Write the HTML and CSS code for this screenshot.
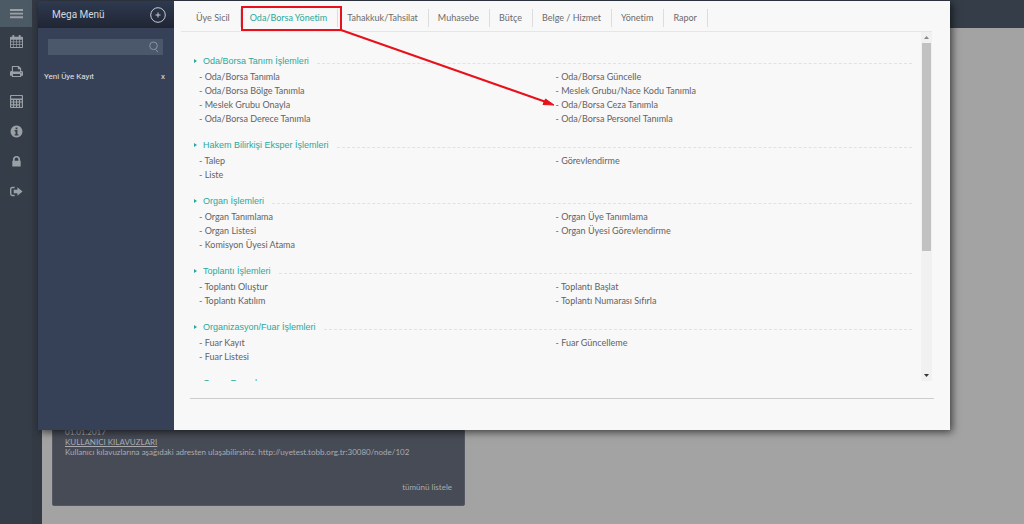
FILE: index.html
```html
<!DOCTYPE html>
<html lang="tr">
<head>
<meta charset="utf-8">
<title>Mega Menü</title>
<link rel="stylesheet" href="styles.css">
</head>
<body>
<div class="app">
  <nav class="rail" aria-label="Kısayollar">
    <button class="rail-btn active" aria-label="Menü"><svg viewBox="0 0 14 14"><path d="M0 2.2h14v2H0zM0 6.1h14v2H0zM0 10h14v2H0z"/></svg></button>
    <button class="rail-btn" aria-label="Takvim"><svg viewBox="0 0 14 14"><path fill-rule="evenodd" d="M1 2h1.5V.8Q2.500 0 3.300 0h.6q.8 0 .8.8V2h4.600V.8q0-.8.8-.8h.6q.8 0 .8.8V2H13q1 0 1 1v10q0 1-1 1H1q-1 0-1-1V3q0-1 1-1zM1 5v2h2.400V5zm3.100 0v2h2.500V5zm3.200 0v2h2.500V5zm3.200 0v2H13V5zM1 7.700V10h2.400V7.700zm3.100 0V10h2.500V7.700zm3.200 0V10h2.500V7.700zm3.200 0V10H13V7.700zM1 10.700V13h2.400v-2.300zm3.100 0V13h2.500v-2.300zm3.200 0V13h2.500v-2.300zm3.200 0V13H13v-2.300z"/></svg></button>
    <button class="rail-btn" aria-label="Yazdır"><svg viewBox="0 0 14 14"><path fill-rule="evenodd" d="M2 6.500V1h7.500L12 3.500v3h.5Q14 6.500 14 8v3.500h-2V13H2v-1.500H0V8q0-1.500 1.500-1.500zM3.200 2.200V7h7.600V4.500H8.500V2.200zM3.200 9.800v2h7.600v-2zM12 7.700a.6.600 0 1 0 .01 0z"/></svg></button>
    <button class="rail-btn" aria-label="Hesap makinesi"><svg viewBox="0 0 14 14"><path fill-rule="evenodd" d="M1 0h12q1 0 1 1v12q0 1-1 1H1q-1 0-1-1V1q0-1 1-1zM1.300 1.200v2.600h11.400V1.200zM1.300 5.300v1.700h1.900V5.300zm3.200 0v1.700h1.900V5.300zm3.200 0v1.700h1.900V5.300zm3.200 0v1.700h1.800V5.300zM1.300 8.200v1.700h1.900V8.200zm3.200 0v1.700h1.900V8.200zm3.200 0v1.700h1.900V8.200zm3.200 0v4.700h1.800V8.200zM1.300 11.200v1.700h1.900v-1.700zm3.200 0v1.700h1.900v-1.700zm3.200 0v1.700h1.900v-1.700z"/></svg></button>
    <button class="rail-btn" aria-label="Bilgi"><svg viewBox="0 0 14 14"><path fill-rule="evenodd" d="M7 .6a6.400 6.400 0 1 0 .01 0zM6 2.700h2v1.800H6zM5 5.500h3v4.400h1v1.400H5V9.900h1V6.900H5z"/></svg></button>
    <button class="rail-btn" aria-label="Kilitle"><svg viewBox="0 0 14 14"><path fill-rule="evenodd" d="M3.200 6.200V4.800a3.800 3.800 0 0 1 7.600 0v1.400h.7v6.300h-9V6.200zM5 6.200h4V4.800a2 2 0 0 0-4 0z"/></svg></button>
    <button class="rail-btn" aria-label="Çıkış"><svg viewBox="0 0 14 14"><path d="M5 2v1.500H2.500q-1 0-1 1v5q0 1 1 1H5V12H2.500Q0 12 0 9.500v-5Q0 2 2.500 2zM8 2.500L13.500 7 8 11.500V9H4V5h4z"/></svg></button>
  </nav>
  <div class="gutter"></div>
  <div class="page">
    <header class="topbar"></header>
    <main class="content">
      <section class="news">
        <time class="news-date">01.01.2017</time>
        <a class="news-title" href="#">KULLANICI KILAVUZLARI</a>
        <p class="news-text">Kullanıcı kılavuzlarına aşağıdaki adresten ulaşabilirsiniz. http://uyetest.tobb.org.tr:30080/node/102</p>
        <a class="news-all" href="#">tümünü listele</a>
      </section>
    </main>
  </div>
</div>

<div class="mega">
  <aside class="side">
    <header class="side-head">
      <h1 class="side-title">Mega Menü</h1>
      <button class="add" aria-label="Ekle"><svg viewBox="0 0 16 16"><circle cx="8" cy="8" r="7.300"/><path d="M8 5.500v5M5.500 8h5"/></svg></button>
    </header>
    <div class="search">
      <input class="search-input" type="text" aria-label="Ara">
      <svg class="search-icon" viewBox="0 0 10 12"><circle cx="4.500" cy="4.800" r="3.800"/><path d="M6.500 8.300L9 11.200"/></svg>
    </div>
    <div class="recent"><a class="recent-link" href="#">Yeni Üye Kayıt</a><button class="recent-close" aria-label="Kaldır">x</button></div>
  </aside>
  <div class="panel">
    <nav class="tabs">
      <a class="tab" href="#">Üye Sicil</a><a class="tab current" href="#">Oda/Borsa Yönetim</a><a class="tab" href="#">Tahakkuk/Tahsilat</a><a class="tab" href="#">Muhasebe</a><a class="tab" href="#">Bütçe</a><a class="tab" href="#">Belge / Hizmet</a><a class="tab" href="#">Yönetim</a><a class="tab" href="#">Rapor</a>
    </nav>
    <div class="scroll">
      <div class="groups">
        <section class="group">
          <h2 class="group-title">Oda/Borsa Tanım İşlemleri</h2>
          <ul class="links">
            <li><a href="#">Oda/Borsa Tanımla</a></li><li><a href="#">Oda/Borsa Güncelle</a></li>
            <li><a href="#">Oda/Borsa Bölge Tanımla</a></li><li><a href="#">Meslek Grubu/Nace Kodu Tanımla</a></li>
            <li><a href="#">Meslek Grubu Onayla</a></li><li><a href="#">Oda/Borsa Ceza Tanımla</a></li>
            <li><a href="#">Oda/Borsa Derece Tanımla</a></li><li><a href="#">Oda/Borsa Personel Tanımla</a></li>
          </ul>
        </section>
        <section class="group">
          <h2 class="group-title">Hakem Bilirkişi Eksper İşlemleri</h2>
          <ul class="links">
            <li><a href="#">Talep</a></li><li><a href="#">Görevlendirme</a></li>
            <li><a href="#">Liste</a></li>
          </ul>
        </section>
        <section class="group">
          <h2 class="group-title">Organ İşlemleri</h2>
          <ul class="links">
            <li><a href="#">Organ Tanımlama</a></li><li><a href="#">Organ Üye Tanımlama</a></li>
            <li><a href="#">Organ Listesi</a></li><li><a href="#">Organ Üyesi Görevlendirme</a></li>
            <li><a href="#">Komisyon Üyesi Atama</a></li>
          </ul>
        </section>
        <section class="group">
          <h2 class="group-title">Toplantı İşlemleri</h2>
          <ul class="links">
            <li><a href="#">Toplantı Oluştur</a></li><li><a href="#">Toplantı Başlat</a></li>
            <li><a href="#">Toplantı Katılım</a></li><li><a href="#">Toplantı Numarası Sıfırla</a></li>
          </ul>
        </section>
        <section class="group">
          <h2 class="group-title">Organizasyon/Fuar İşlemleri</h2>
          <ul class="links">
            <li><a href="#">Fuar Kayıt</a></li><li><a href="#">Fuar Güncelleme</a></li>
            <li><a href="#">Fuar Listesi</a></li>
          </ul>
        </section>
        <section class="group">
          <h2 class="group-title">Organ Raporları</h2>
        </section>
      </div>
      <div class="bar" aria-hidden="true">
        <svg class="bar-arrow up" viewBox="0 0 11 11"><path d="M5.500 4L8 7H3z"/></svg>
        <div class="thumb"></div>
        <div class="track"></div>
        <svg class="bar-arrow" viewBox="0 0 11 11"><path d="M5.500 7L3 4h5z"/></svg>
      </div>
    </div>
    <footer class="panel-foot"></footer>
  </div>
</div>

<svg class="callout" viewBox="0 0 320 110" aria-hidden="true">
  <rect x="3" y="4" width="99" height="23"/>
  <path class="shaft" d="M102 27L307 99"/>
  <path class="tip" d="M315 102L304 101.500L306.500 96z"/>
</svg>
</body>
</html>
```

FILE: styles.css
```css
* { box-sizing: border-box; }
body { margin: 0; font-family: Lato, "Open Sans", sans-serif; font-size: 9px; font-variant-ligatures: none; background: #a3a3a3; overflow: hidden; }
h1, h2, p, ul { margin: 0; padding: 0; font-weight: 400; }
a { color: inherit; text-decoration: none; }
button { border: 0; padding: 0; background: none; color: inherit; font: inherit; cursor: pointer; }

.app { display: flex; min-height: 100vh; }
.rail { width: 32px; background: #353e48; display: flex; flex-direction: column; flex: none; }
.rail-btn { height: 30px; display: flex; align-items: center; justify-content: center; }
.rail-btn svg { width: 13px; height: 13px; fill: #9aa0a5; }
.rail-btn.active { height: 27px; margin-bottom: -1px; background: #4c5a66; }
.gutter { width: 10px; background: #343a44; flex: none; }
.page { flex: 1; display: flex; flex-direction: column; }
.topbar { height: 28px; background: #353d48; }
.content { flex: 1; display: flex; align-items: flex-end; padding: 0 10px 18px; }
.news { width: 413px; padding: 12px 12px 13px; border: 1px solid #555862; border-radius: 2px; background: #474b56; color: #a9abb0; display: flex; flex-direction: column; font-size: 8px; line-height: 10px; }
.news-title { align-self: flex-start; text-decoration: underline; }
.news-text { margin-bottom: 25px; }
.news-all { align-self: flex-end; }

.mega { position: absolute; top: 1px; left: 38px; right: 74px; height: 429px; display: flex; box-shadow: 2px 2px 8px rgba(0, 0, 0, .65); }
.side { width: 136px; flex: none; background: #364056; color: #d4d8de; font-family: Roboto, "Liberation Sans", sans-serif; }
.side-head { height: 27px; padding: 0 8px 0 14px; display: flex; align-items: center; justify-content: space-between; background: linear-gradient(#2f3a50, #1f2533); }
.side-title { font-size: 10px; }
.add { display: flex; }
.add svg { width: 16px; height: 16px; fill: none; stroke: #c6cbd3; }
.search { margin: 11px 11px 0 10px; height: 16px; background: #4b586b; display: flex; align-items: center; padding-right: 4px; }
.search-input { flex: 1; min-width: 0; border: 0; background: none; color: inherit; }
.search-icon { width: 10px; height: 12px; fill: none; stroke: #8994a2; }
.recent { display: flex; justify-content: space-between; padding: 17px 9px 0 6px; font-size: 8px; line-height: 10px; color: #e2e4e8; }

.panel { flex: 1; min-width: 0; background: #f8f8f8; display: flex; flex-direction: column; padding: 0 16px 0 7px; }
.tabs { height: 31px; display: flex; align-items: center; padding: 4px 0 0 6px; margin-right: 2px; border-bottom: 1px solid #e6e6e6; color: #6b6b6b; }
.tab { height: 18px; line-height: 18px; padding: 0 10px 0 9px; border-right: 1px solid #ddd; white-space: nowrap; }
.current { color: #2aa89a; }
.scroll { flex: 1; min-height: 0; display: flex; margin-right: 2px; }
.groups { flex: 1; min-width: 0; overflow: hidden; padding: 22px 9px 0 13px; }
.group { margin-bottom: 12px; }
.group-title { display: flex; align-items: center; font-family: "Liberation Sans", sans-serif; font-size: 9px; line-height: 14px; color: #2aa89a; margin-bottom: 2px; }
.group-title::before { content: ""; border: 2px solid transparent; border-left: 3px solid #2aa89a; border-right: 0; margin-right: 6px; }
.group-title::after { content: ""; flex: 1; border-bottom: 1px dashed #e2e2e2; margin: 5px 0 0 8px; }
.links { list-style: none; display: grid; grid-template-columns: 1fr 1fr; padding-left: 5px; color: #636363; line-height: 14px; }
.links li::before { content: "- "; }
.bar { width: 11px; display: flex; flex-direction: column; background: #f1f1f1; }
.bar-arrow { width: 11px; height: 11px; fill: #333; }
.up { fill: #888; }
.thumb { height: 208px; margin: 0 1px; background: #c1c1c1; }
.track { flex: 1; }
.panel-foot { height: 32px; margin: 17px 0 0 9px; border-top: 1px solid #ccc; }

.callout { position: absolute; left: 239px; top: 3px; width: 320px; height: 110px; pointer-events: none; fill: none; stroke: #e8101a; stroke-width: 2; }
.callout .tip { fill: #e8101a; stroke-width: 1; }
```
